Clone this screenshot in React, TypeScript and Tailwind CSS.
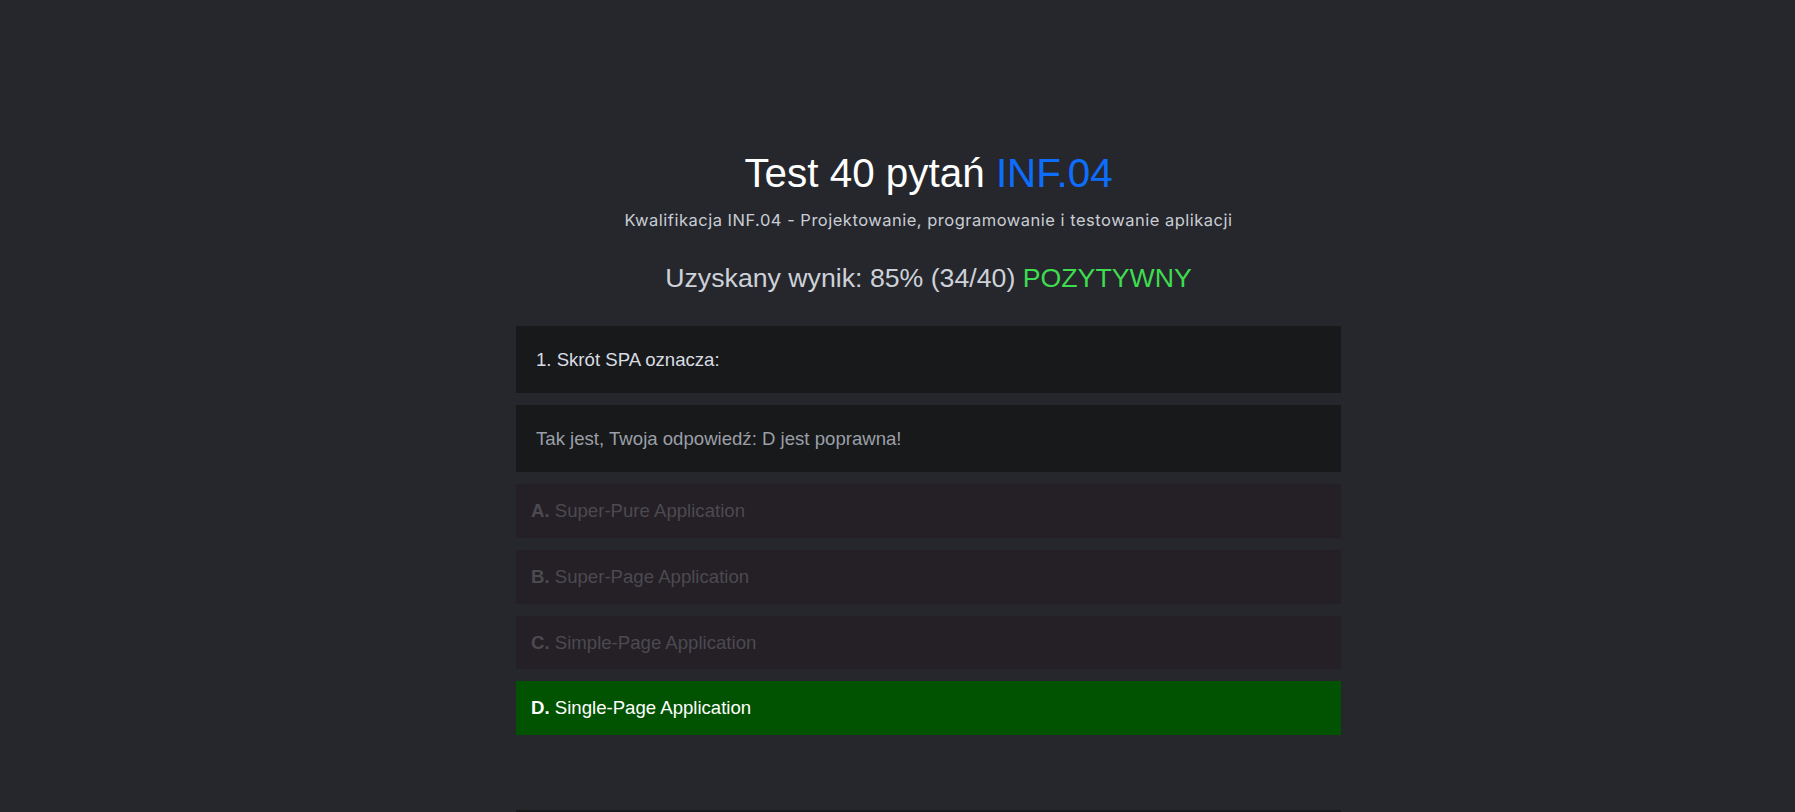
const options = [
    { letter: 'A', text: 'Super-Pure Application', correct: false },
    { letter: 'B', text: 'Super-Page Application', correct: false },
    { letter: 'C', text: 'Simple-Page Application', correct: false },
    { letter: 'D', text: 'Single-Page Application', correct: true },
]

function Question() {
    return (
        <div className="flex flex-col gap-[12.2px]">
            <div className="bg-[#18191b] p-[20px] text-[18.6px] leading-[27px] text-[#d8dce3]">
                1. Skrót SPA oznacza:
            </div>
            <div className="bg-[#18191b] p-[20px] text-[18.6px] leading-[27px] text-[#9b9fa7]">
                Tak jest, Twoja odpowiedź: D jest poprawna!
            </div>
            {options.map((o) => (
                <div
                    key={o.letter}
                    className={
                        o.correct
                            ? 'bg-[#015301] px-[15px] py-[13px] text-[18.6px] leading-[27.5px] text-white'
                            : 'bg-[#252026] px-[15px] py-[13px] text-[18.6px] leading-[27.5px] text-[#4b4a50]'
                    }
                >
                    <span className="font-bold">{o.letter}.</span> {o.text}
                </div>
            ))}
        </div>
    )
}

export default function App() {
    return (
        <div
            className="min-h-screen bg-[#26272d] pl-[62px] pb-[40px]"
            style={{ fontFamily: '"Liberation Sans", Arial, sans-serif' }}
        >
            <div className="mx-auto w-[825px] pt-[149px]">
                <h1 className="text-center text-[40.4px] leading-[48px] font-normal text-white">
                    Test 40 pytań <span className="text-[#0d6efd]">INF.04</span>
                </h1>
                <p
                    className="mt-[11px] text-center text-[16.5px] leading-[24px] tracking-[0.5px] text-[#c9cdd4]"
                    style={{ fontFamily: 'Inter, "Noto Sans", sans-serif' }}
                >
                    Kwalifikacja INF.04 - Projektowanie, programowanie i testowanie aplikacji
                </p>
                <p className="mt-[31px] text-center text-[26.7px] leading-[31px] text-[#cdd1d8]">
                    Uzyskany wynik: 85% (34/40) <span className="text-[#3fdc4f]">POZYTYWNY</span>
                </p>
                <div className="mt-[32px]">
                    <Question />
                </div>
                <div className="mt-[75px] h-[67px] bg-[#18191b]" />
            </div>
        </div>
    )
}
